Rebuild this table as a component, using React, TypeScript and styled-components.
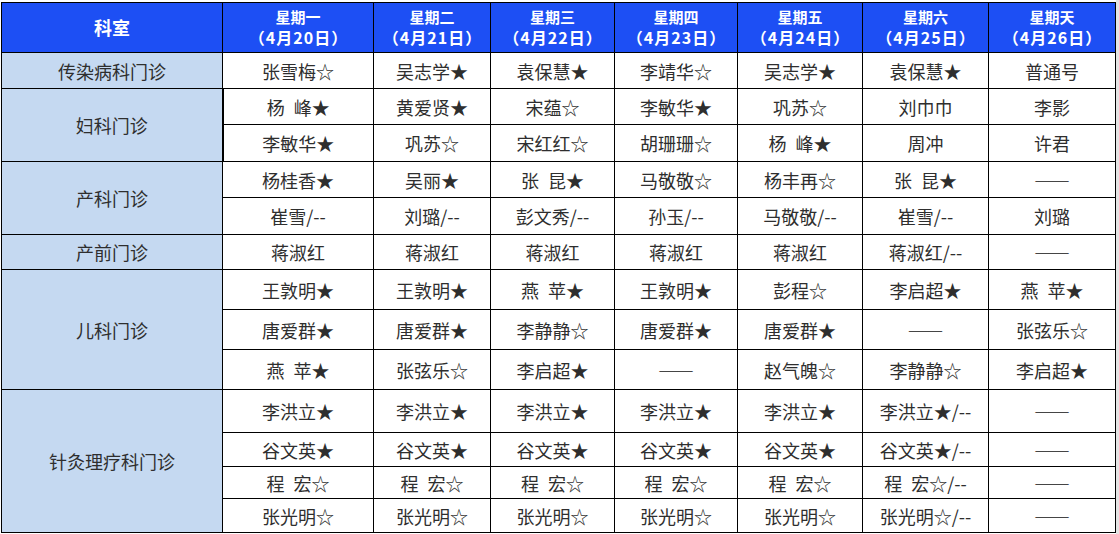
import React from "react";
import styled, { createGlobalStyle } from "styled-components";

const Global = createGlobalStyle`
  html, body { margin: 0; padding: 0; background: #ffffff; }
  body { font-family: "Noto Sans CJK SC", "Liberation Serif", serif; }
`;

const Frame = styled.div`
  width: 1119px;
  padding: 2px 0 2px 1px;
  box-sizing: border-box;
  border-right: 3px solid #e4e4e4;
`;

const Table = styled.table`
  border-collapse: collapse;
  table-layout: fixed;
  width: 1115px;
`;

const Row = styled.tr<{ $h: number }>`
  height: ${(p) => p.$h}px;
`;

const HeadCell = styled.th<{ $big?: boolean }>`
  background: #1d4ff4;
  color: #ffffff;
  border: 1px solid #000;
  padding: 0 0 2px;
  font-weight: 700;
  font-size: ${(p) => (p.$big ? 18 : 15)}px;
  line-height: 20px;
  text-align: center;
  vertical-align: middle;
`;

const HeadLine = styled.div<{ $date?: boolean }>`
  white-space: nowrap;
  ${(p) => (p.$date ? "font-size: 16px; letter-spacing: 1px; text-indent: 1px;" : "")}
`;

const DeptCell = styled.td<{ $thick?: boolean }>`
  background: #c5d9f1;
  color: #2e2e2e;
  border: 1px solid #000;
  ${(p) => (p.$thick ? "border-right: 2px solid #000;" : "")}
  padding: 0;
  font-size: 18px;
  text-align: center;
  vertical-align: middle;
`;

const Cell = styled.td`
  background: #ffffff;
  color: #2e2e2e;
  border: 1px solid #000;
  padding: 0;
  font-size: 18px;
  line-height: 22px;
  text-align: center;
  vertical-align: middle;
  white-space: nowrap;
`;

const Dash = styled.span`
  font-feature-settings: "fwid" 1;
  font-weight: 700;
  color: #111;
`;

const widths = [221, 151, 117, 124, 123, 125, 126, 127];

const days = [
  ["星期一", "（4月20日）"],
  ["星期二", "（4月21日）"],
  ["星期三", "（4月22日）"],
  ["星期四", "（4月23日）"],
  ["星期五", "（4月24日）"],
  ["星期六", "（4月25日）"],
  ["星期天", "（4月26日）"],
];

const S = "\u2002";

type Group = { dept: string; thick?: boolean; heights: number[]; rows: string[][] };

const groups: Group[] = [
  {
    dept: "传染病科门诊",
    heights: [36],
    rows: [["张雪梅☆", "吴志学★", "袁保慧★", "李靖华☆", "吴志学★", "袁保慧★", "普通号"]],
  },
  {
    dept: "妇科门诊",
    thick: true,
    heights: [36, 37],
    rows: [
      [`杨${S}峰★`, "黄爱贤★", "宋蕴☆", "李敏华★", "巩苏☆", "刘巾巾", "李影"],
      ["李敏华★", "巩苏☆", "宋红红☆", "胡珊珊☆", `杨${S}峰★`, "周冲", "许君"],
    ],
  },
  {
    dept: "产科门诊",
    heights: [36, 37],
    rows: [
      ["杨桂香★", "吴丽★", `张${S}昆★`, "马敬敬☆", "杨丰再☆", `张${S}昆★`, "——"],
      ["崔雪/--", "刘璐/--", "彭文秀/--", "孙玉/--", "马敬敬/--", "崔雪/--", "刘璐"],
    ],
  },
  {
    dept: "产前门诊",
    heights: [35],
    rows: [["蒋淑红", "蒋淑红", "蒋淑红", "蒋淑红", "蒋淑红", "蒋淑红/--", "——"]],
  },
  {
    dept: "儿科门诊",
    heights: [40, 40, 40],
    rows: [
      ["王敦明★", "王敦明★", `燕${S}苹★`, "王敦明★", "彭程☆", "李启超★", `燕${S}苹★`],
      ["唐爱群★", "唐爱群★", "李静静☆", "唐爱群★", "唐爱群★", "——", "张弦乐☆"],
      [`燕${S}苹★`, "张弦乐☆", "李启超★", "——", "赵气魄☆", "李静静☆", "李启超★"],
    ],
  },
  {
    dept: "针灸理疗科门诊",
    heights: [43, 34, 32, 34],
    rows: [
      ["李洪立★", "李洪立★", "李洪立★", "李洪立★", "李洪立★", "李洪立★/--", "——"],
      ["谷文英★", "谷文英★", "谷文英★", "谷文英★", "谷文英★", "谷文英★/--", "——"],
      [`程${S}宏☆`, `程${S}宏☆`, `程${S}宏☆`, `程${S}宏☆`, `程${S}宏☆`, `程${S}宏☆/--`, "——"],
      ["张光明☆", "张光明☆", "张光明☆", "张光明☆", "张光明☆", "张光明☆/--", "——"],
    ],
  },
];

export default function App() {
  return (
    <>
      <Global />
      <Frame>
        <Table>
          <colgroup>
            {widths.map((w, i) => (
              <col key={i} style={{ width: w }} />
            ))}
          </colgroup>
          <thead>
            <Row $h={50}>
              <HeadCell $big>科室</HeadCell>
              {days.map(([d, date]) => (
                <HeadCell key={d}>
                  <HeadLine>{d}</HeadLine>
                  <HeadLine $date>{date}</HeadLine>
                </HeadCell>
              ))}
            </Row>
          </thead>
          <tbody>
            {groups.map((g) =>
              g.rows.map((r, ri) => (
                <Row key={g.dept + ri} $h={g.heights[ri]}>
                  {ri === 0 && (
                    <DeptCell rowSpan={g.rows.length} $thick={g.thick}>
                      {g.dept}
                    </DeptCell>
                  )}
                  {r.map((c, ci) => (
                    <Cell key={ci}>{c === "——" ? <Dash>{c}</Dash> : c}</Cell>
                  ))}
                </Row>
              ))
            )}
          </tbody>
        </Table>
      </Frame>
    </>
  );
}
